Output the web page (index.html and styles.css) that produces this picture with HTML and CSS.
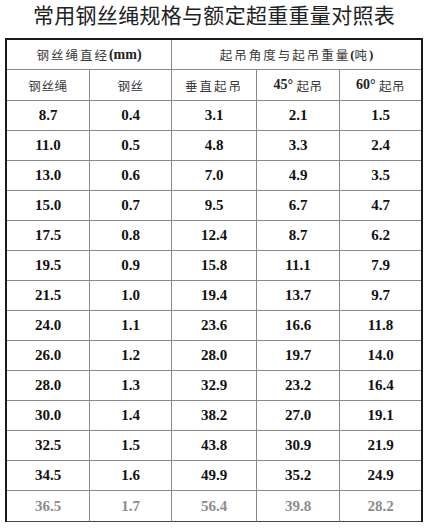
FILE: index.html
```html
<!DOCTYPE html>
<html lang="zh-CN">
<head>
<meta charset="utf-8">
<title>常用钢丝绳规格与额定超重重量对照表</title>
<link rel="stylesheet" href="styles.css">
</head>
<body>
<h1 class="title">常用钢丝绳规格与额定超重重量对照表</h1>
<div class="grid">
  <div class="cell head span2 wide">钢丝绳直经<b class="num">(mm)</b></div>
  <div class="cell head span3 last wide">起吊角度与起吊重量<b class="paren">(</b>吨<b class="paren">)</b></div>
  <div class="cell head">钢丝绳</div>
  <div class="cell head">钢丝</div>
  <div class="cell head mid">垂直起吊</div>
  <div class="cell head"><b class="num">45°</b>&nbsp;起吊</div>
  <div class="cell head last"><b class="num">60°</b>&nbsp;起吊</div>

  <div class="cell n">8.7</div><div class="cell n">0.4</div><div class="cell n">3.1</div><div class="cell n">2.1</div><div class="cell n last">1.5</div>
  <div class="cell n">11.0</div><div class="cell n">0.5</div><div class="cell n">4.8</div><div class="cell n">3.3</div><div class="cell n last">2.4</div>
  <div class="cell n">13.0</div><div class="cell n">0.6</div><div class="cell n">7.0</div><div class="cell n">4.9</div><div class="cell n last">3.5</div>
  <div class="cell n">15.0</div><div class="cell n">0.7</div><div class="cell n">9.5</div><div class="cell n">6.7</div><div class="cell n last">4.7</div>
  <div class="cell n">17.5</div><div class="cell n">0.8</div><div class="cell n">12.4</div><div class="cell n">8.7</div><div class="cell n last">6.2</div>
  <div class="cell n">19.5</div><div class="cell n">0.9</div><div class="cell n">15.8</div><div class="cell n">11.1</div><div class="cell n last">7.9</div>
  <div class="cell n">21.5</div><div class="cell n">1.0</div><div class="cell n">19.4</div><div class="cell n">13.7</div><div class="cell n last">9.7</div>
  <div class="cell n">24.0</div><div class="cell n">1.1</div><div class="cell n">23.6</div><div class="cell n">16.6</div><div class="cell n last">11.8</div>
  <div class="cell n">26.0</div><div class="cell n">1.2</div><div class="cell n">28.0</div><div class="cell n">19.7</div><div class="cell n last">14.0</div>
  <div class="cell n">28.0</div><div class="cell n">1.3</div><div class="cell n">32.9</div><div class="cell n">23.2</div><div class="cell n last">16.4</div>
  <div class="cell n">30.0</div><div class="cell n">1.4</div><div class="cell n">38.2</div><div class="cell n">27.0</div><div class="cell n last">19.1</div>
  <div class="cell n">32.5</div><div class="cell n">1.5</div><div class="cell n">43.8</div><div class="cell n">30.9</div><div class="cell n last">21.9</div>
  <div class="cell n">34.5</div><div class="cell n">1.6</div><div class="cell n">49.9</div><div class="cell n">35.2</div><div class="cell n last">24.9</div>
  <div class="cell n faded bottom">36.5</div><div class="cell n faded bottom">1.7</div><div class="cell n faded bottom">56.4</div><div class="cell n faded bottom">39.8</div><div class="cell n faded bottom last">28.2</div>
</div>
</body>
</html>
```
FILE: styles.css
```css
html, body {
  margin: 0;
  padding: 0;
  background: #ffffff;
}
body {
  width: 428px;
  height: 531px;
  overflow: hidden;
}
.title {
  margin: 0;
  height: 38px;
  line-height: 29px;
  text-align: center;
  font-family: "Noto Sans CJK SC", sans-serif;
  font-weight: normal;
  font-size: 21px;
  letter-spacing: 0.3px;
  color: #222;
}
.grid {
  margin-left: 5px;
  width: 418px;
  box-sizing: border-box;
  border-top: 2px solid #1a1a1a;
  border-left: 2px solid #1a1a1a;
  border-right: 2px solid #1a1a1a;
  display: grid;
  grid-template-columns: 83px 82px 85px 83px 81px;
  grid-template-rows: 30px 31px repeat(13, 30px) 31px;
}
.cell {
  box-sizing: border-box;
  border-right: 1px solid #8a8a8a;
  border-bottom: 1px solid #8a8a8a;
  display: flex;
  align-items: center;
  justify-content: center;
}
.cell.last {
  border-right: none;
}
.span2 { grid-column: span 2; }
.span3 { grid-column: span 3; }
.head {
  font-family: "Noto Sans CJK SC", sans-serif;
  font-size: 12.5px;
  color: #3a3a3a;
  letter-spacing: 0.6px;
}
.head.wide {
  letter-spacing: 2px;
}
.head.mid {
  letter-spacing: 2px;
}
.num {
  font-family: "Liberation Serif", serif;
  font-weight: bold;
  font-size: 14px;
  letter-spacing: 0;
  color: #222;
}
.paren {
  font-family: "Liberation Serif", serif;
  font-weight: bold;
  font-size: 13px;
  letter-spacing: 0;
  color: #222;
}
.n {
  font-family: "Liberation Serif", serif;
  font-weight: bold;
  font-size: 15px;
  color: #111;
}
.faded {
  color: #8c8c8c;
}
.bottom {
  border-bottom-color: #444;
}
```
